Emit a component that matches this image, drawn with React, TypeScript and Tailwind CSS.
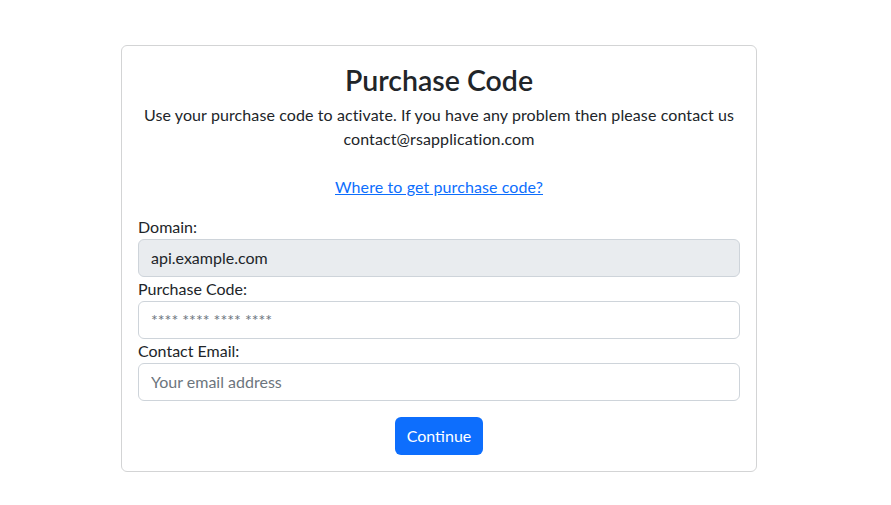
import React from 'react';

const App: React.FC = () => {
  return (
    <div
      className="min-h-[505px] w-full bg-white text-[#212529]"
      style={{ fontFamily: 'Lato, "Noto Sans", sans-serif' }}
    >
      <div className="pt-[45px] pl-[121px]">
        <div className="w-[636px] rounded-md border border-[#d3d4d5] bg-white">
          <div className="px-4 pt-[19px] pb-4">
            <h3 className="mb-[6px] text-center text-[28.5px] font-semibold leading-[1.12]">Purchase Code</h3>
            <p className="mb-4 text-center text-base leading-6 tracking-[0.1px]">
              Use your purchase code to activate. If you have any problem then please contact us
              <br />
              contact@rsapplication.com
              <br />
              <br />
              <a href="#" className="text-[#0d6efd] underline">
                Where to get purchase code?
              </a>
            </p>

            <form className="text-base leading-6" onSubmit={(e) => e.preventDefault()}>
              <label className="block">Domain:</label>
              <input
                type="text"
                value="api.example.com"
                disabled
                readOnly
                className="block h-[38px] w-full rounded-md border border-[#ced4da] bg-[#e9ecef] px-3 py-1.5 text-base text-[#212529] outline-none"
              />
              <label className="block">Purchase Code:</label>
              <input
                type="text"
                placeholder="**** **** **** ****"
                className="block h-[38px] w-full rounded-md border border-[#ced4da] bg-white px-3 py-1.5 text-base outline-none placeholder:text-[#6c757d]"
              />
              <label className="block">Contact Email:</label>
              <input
                type="email"
                placeholder="Your email address"
                className="block h-[38px] w-full rounded-md border border-[#ced4da] bg-white px-3 py-1.5 text-base outline-none placeholder:text-[#6c757d]"
              />
              <div className="mt-4 flex justify-center">
                <button
                  type="submit"
                  className="h-[38px] rounded-md bg-[#0d6efd] px-3 text-base leading-6 text-white"
                >
                  Continue
                </button>
              </div>
            </form>
          </div>
        </div>
      </div>
    </div>
  );
};

export default App;
